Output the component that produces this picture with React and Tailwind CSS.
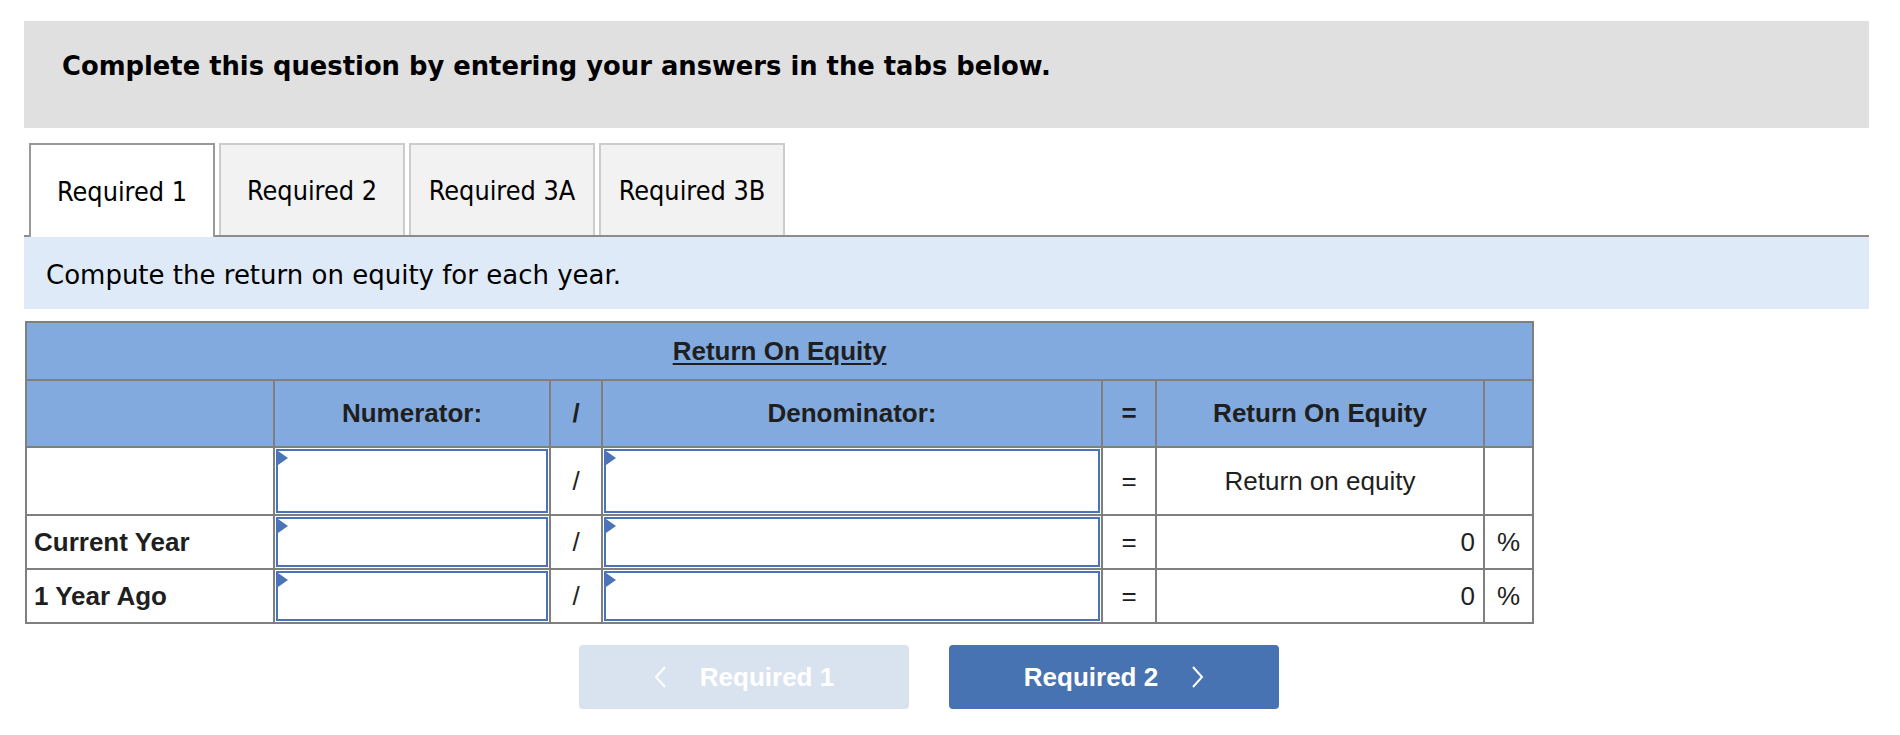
import React from 'react';

const tahoma = "font-['DejaVu_Sans_Condensed','DejaVu_Sans',sans-serif]";
const verdana = "font-['DejaVu_Sans',sans-serif]";
const bd = 'border-2 border-[#7f7f7f]';

function Flag() {
  return (
    <span className="absolute left-[2px] top-[2px] w-0 h-0 border-y-[7px] border-y-transparent border-l-[10px] border-l-[#4a74b7]" />
  );
}

function InputCell({ tall }) {
  return (
    <td className={`${bd} p-[1px] bg-white`}>
      <div className={`relative ${tall ? 'h-[64px]' : 'h-[50px]'}`}>
        <Flag />
        <input className="block w-full h-full border-2 border-[#4a74b7] bg-white outline-none" />
      </div>
    </td>
  );
}

const tabs = ['Required 1', 'Required 2', 'Required 3A', 'Required 3B'];

export default function App() {
  return (
    <div className="min-h-screen bg-white pt-[21px] pl-[24px] font-['Liberation_Sans',Arial,sans-serif] text-[#1f1f1f]">
      <div className="w-[1845px]">
        {/* instructions */}
        <div className="h-[107px] bg-[#e0e0e0] pl-[38px] pt-[30px]">
          <h1 className={`${verdana} font-bold text-[25.8px] leading-[30px] text-black`}>
            Complete this question by entering your answers in the tabs below.
          </h1>
        </div>

        {/* tabs */}
        <div className="mt-[15px] h-[94px] flex items-end gap-[4px] pl-[5px] border-b-2 border-[#8c8c8c]">
          {tabs.map((t, i) =>
            i === 0 ? (
              <div key={t} className={`${tahoma} w-[186px] h-[94px] -mb-[2px] pt-[2px] flex items-center justify-center bg-white border-2 border-b-0 border-[#999999] text-[26.8px] text-black`}>
                {t}
              </div>
            ) : (
              <div key={t} className={`${tahoma} w-[186px] h-[92px] pt-[2px] flex items-center justify-center bg-[#f2f2f2] border-2 border-b-0 border-[#cccccc] text-[26.8px] text-black`}>
                {t}
              </div>
            )
          )}
        </div>

        <div className={`${verdana} h-[72px] bg-[#deeaf7] pl-[22px] pt-[4px] flex items-center text-[26px] text-black`}>
          Compute the return on equity for each year.
        </div>

        {/* table */}
        <table className="mt-[12px] ml-[1px] w-[1507px] table-fixed border-collapse text-[26px]">
          <colgroup>
            <col className="w-[248px]" />
            <col className="w-[276px]" />
            <col className="w-[52px]" />
            <col className="w-[500px]" />
            <col className="w-[54px]" />
            <col className="w-[328px]" />
            <col className="w-[49px]" />
          </colgroup>
          <thead>
            <tr className="h-[58px] bg-[#82aade]">
              <th colSpan={7} className={`${bd} font-bold`}>
                <span className="underline underline-offset-[3px]">Return On Equity</span>
              </th>
            </tr>
            <tr className="h-[67px] bg-[#82aade] font-bold">
              <th className={bd}></th>
              <th className={bd}>Numerator:</th>
              <th className={bd}>/</th>
              <th className={bd}>Denominator:</th>
              <th className={bd}>=</th>
              <th className={bd}>Return On Equity</th>
              <th className={bd}></th>
            </tr>
          </thead>
          <tbody>
            <tr className="h-[68px]">
              <td className={bd}></td>
              <InputCell tall />
              <td className={`${bd} text-center`}>/</td>
              <InputCell tall />
              <td className={`${bd} text-center`}>=</td>
              <td className={`${bd} text-center`}>Return on equity</td>
              <td className={bd}></td>
            </tr>
            {['Current Year', '1 Year Ago'].map((r) => (
              <tr key={r} className="h-[54px]">
                <td className={`${bd} pl-[7px] font-bold`}>{r}</td>
                <InputCell />
                <td className={`${bd} text-center`}>/</td>
                <InputCell />
                <td className={`${bd} text-center`}>=</td>
                <td className={`${bd} text-right pr-[8px]`}>0</td>
                <td className={`${bd} text-center`}>%</td>
              </tr>
            ))}
          </tbody>
        </table>

        {/* nav buttons */}
        <div className="mt-[21px] ml-[555px] flex gap-[40px]">
          <button className="w-[330px] h-[64px] rounded-[4px] bg-[#d9e3ef] flex items-center justify-center gap-[33px] text-white font-bold text-[26px]">
            <svg width="13" height="22" viewBox="0 0 13 22" fill="none" stroke="white" strokeWidth="2">
              <polyline points="11,1 2,11 11,21" />
            </svg>
            <span>Required 1</span>
          </button>
          <button className="w-[330px] h-[64px] rounded-[4px] bg-[#4873b2] flex items-center justify-center gap-[33px] text-white font-bold text-[26px]">
            <span>Required 2</span>
            <svg width="13" height="22" viewBox="0 0 13 22" fill="none" stroke="white" strokeWidth="2">
              <polyline points="2,1 11,11 2,21" />
            </svg>
          </button>
        </div>
      </div>
    </div>
  );
}
